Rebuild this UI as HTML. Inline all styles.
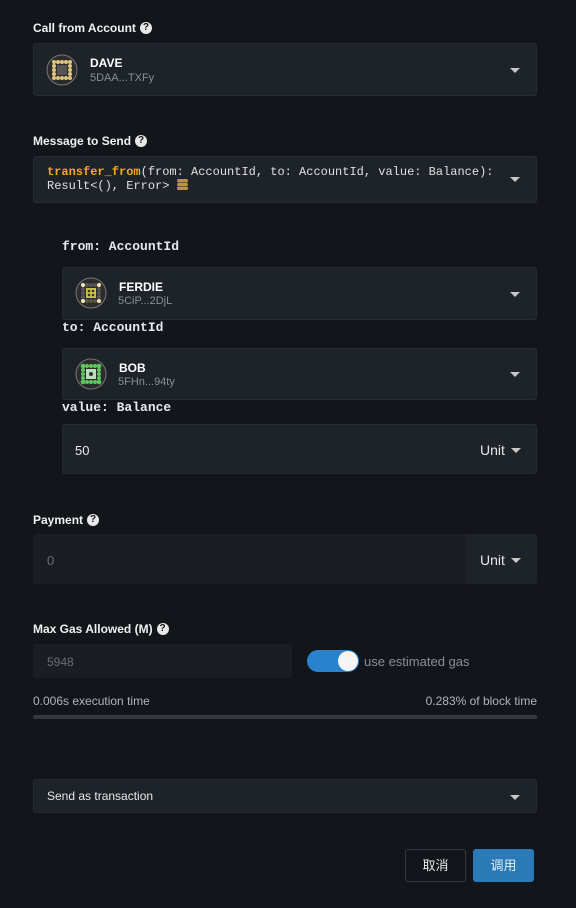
<!DOCTYPE html>
<html><head><meta charset="utf-8"><style>
*{margin:0;padding:0;box-sizing:border-box}
body{width:576px;height:908px;background:#12161a;font-family:"Liberation Sans","Noto Sans CJK SC",sans-serif;color:#e8e8e8;position:relative;overflow:hidden}
.a{position:absolute}
.lbl{position:absolute;font-size:12px;font-weight:bold;color:#f0f0f0;left:33px;line-height:14px}
.q{display:inline-block;width:12px;height:12px;border-radius:50%;background:#e8e8e8;color:#12161a;font-size:10px;text-align:center;line-height:12px;font-weight:bold;vertical-align:top;margin-left:4px;margin-top:1px}
.box{position:absolute;background:#1e2229;border:1px solid #272c33;border-radius:3px}
.caret{position:absolute;width:0;height:0;border-left:5px solid transparent;border-right:5px solid transparent;border-top:5px solid #c8c8c8}
.mono{position:absolute;font-family:"Liberation Mono",monospace;font-size:13px;font-weight:bold;color:#e8e8f0;left:62px}
.name{position:absolute;font-size:12px;font-weight:bold;color:#fff}
.addr{position:absolute;font-size:11px;color:#8a8f96}
</style></head><body>

<div class="lbl" style="top:21px">Call from Account<span class="q">?</span></div>
<div class="box" style="left:33px;top:43px;width:504px;height:53px"></div>
<svg class="a" style="left:46px;top:54px" width="32" height="32" viewBox="0 0 32 32"><circle cx="16" cy="16" r="15" fill="#2c2c2c" stroke="#777" stroke-width="1"/><g fill="#dcc67c"><circle cx="8" cy="8" r="2"/><circle cx="12" cy="8" r="2"/><circle cx="16" cy="8" r="2"/><circle cx="20" cy="8" r="2"/><circle cx="24" cy="8" r="2"/><circle cx="8" cy="24" r="2"/><circle cx="12" cy="24" r="2"/><circle cx="16" cy="24" r="2"/><circle cx="20" cy="24" r="2"/><circle cx="24" cy="24" r="2"/><circle cx="8" cy="12" r="2"/><circle cx="8" cy="16" r="2"/><circle cx="8" cy="20" r="2"/><circle cx="24" cy="12" r="2"/><circle cx="24" cy="16" r="2"/><circle cx="24" cy="20" r="2"/></g><rect x="11" y="11" width="10" height="10" fill="#555"/></svg>
<div class="name" style="left:90px;top:56px">DAVE</div>
<div class="addr" style="left:90px;top:72px">5DAA...TXFy</div>
<div class="caret" style="left:510px;top:68px"></div>

<div class="lbl" style="top:134px">Message to Send<span class="q">?</span></div>
<div class="box" style="left:33px;top:156px;width:504px;height:47px"></div>
<div class="a" style="left:47px;top:166px;font-family:'Liberation Mono',monospace;font-size:12px;line-height:13px;color:#e0e0e0;white-space:pre"><span style="color:#f5a623;font-weight:bold">transfer_from</span>(from: AccountId, to: AccountId, value: Balance):
Result&lt;(), Error&gt; <svg width="11" height="11" viewBox="0 0 11 11" style="vertical-align:-1px"><rect x="0" y="0" width="11" height="3.5" rx="1.5" fill="#b8953f"/><rect x="0" y="4" width="11" height="3" rx="1.5" fill="#b8953f"/><rect x="0" y="7.5" width="11" height="3.5" rx="1.5" fill="#b8953f"/></svg></div>
<div class="caret" style="left:510px;top:177px"></div>

<div class="mono" style="top:239px">from: AccountId</div>
<div class="box" style="left:62px;top:267px;width:475px;height:53px"></div>
<svg class="a" style="left:75px;top:277px" width="32" height="32" viewBox="0 0 32 32"><circle cx="16" cy="16" r="15" fill="#2c2c2c" stroke="#777"/><g fill="#555"><circle cx="12" cy="8" r="2"/><circle cx="16" cy="8" r="2"/><circle cx="20" cy="8" r="2"/><circle cx="12" cy="24" r="2"/><circle cx="16" cy="24" r="2"/><circle cx="20" cy="24" r="2"/><circle cx="8" cy="12" r="2"/><circle cx="8" cy="16" r="2"/><circle cx="8" cy="20" r="2"/><circle cx="24" cy="12" r="2"/><circle cx="24" cy="16" r="2"/><circle cx="24" cy="20" r="2"/></g><g fill="#f0e6b0"><circle cx="8" cy="8" r="2"/><circle cx="24" cy="8" r="2"/><circle cx="8" cy="24" r="2"/><circle cx="24" cy="24" r="2"/></g><rect x="11" y="11" width="10" height="10" fill="#c9c24a"/><g fill="#333"><circle cx="14" cy="14" r="1.3"/><circle cx="18" cy="14" r="1.3"/><circle cx="14" cy="18" r="1.3"/><circle cx="18" cy="18" r="1.3"/></g></svg>
<div class="name" style="left:119px;top:280px">FERDIE</div>
<div class="addr" style="left:118px;top:295px">5CiP...2DjL</div>
<div class="caret" style="left:510px;top:292px"></div>

<div class="mono" style="top:320px">to: AccountId</div>
<div class="box" style="left:62px;top:348px;width:475px;height:52px"></div>
<svg class="a" style="left:75px;top:358px" width="32" height="32" viewBox="0 0 32 32"><circle cx="16" cy="16" r="15" fill="#2c2c2c" stroke="#777"/><g fill="#5cc85c"><circle cx="8" cy="8" r="2.3"/><circle cx="12" cy="8" r="2"/><circle cx="16" cy="8" r="2"/><circle cx="20" cy="8" r="2"/><circle cx="24" cy="8" r="2.3"/><circle cx="8" cy="24" r="2.3"/><circle cx="12" cy="24" r="2"/><circle cx="16" cy="24" r="2"/><circle cx="20" cy="24" r="2"/><circle cx="24" cy="24" r="2.3"/><circle cx="8" cy="12" r="2"/><circle cx="8" cy="16" r="2"/><circle cx="8" cy="20" r="2"/><circle cx="24" cy="12" r="2"/><circle cx="24" cy="16" r="2"/><circle cx="24" cy="20" r="2"/></g><rect x="11" y="11" width="10" height="10" fill="#b8e0b8"/><circle cx="16" cy="16" r="2" fill="#333"/></svg>
<div class="name" style="left:119px;top:361px">BOB</div>
<div class="addr" style="left:118px;top:376px">5FHn...94ty</div>
<div class="caret" style="left:510px;top:372px"></div>

<div class="mono" style="top:400px">value: Balance</div>
<div class="box" style="left:62px;top:424px;width:475px;height:50px"></div>
<div class="a" style="left:75px;top:443px;font-size:13px;color:#e8e8e8">50</div>
<div class="a" style="left:480px;top:442px;font-size:14px;color:#e8e8e8">Unit</div>
<div class="caret" style="left:511px;top:448px"></div>

<div class="lbl" style="top:513px">Payment<span class="q">?</span></div>
<div class="a" style="left:33px;top:534px;width:504px;height:50px;background:#1a1d23;border-radius:3px"></div>
<div class="a" style="left:466px;top:534px;width:71px;height:50px;background:#1e2229;border-radius:0 3px 3px 0"></div>
<div class="a" style="left:47px;top:553px;font-size:13px;color:#6a6e74">0</div>
<div class="a" style="left:480px;top:552px;font-size:14px;color:#e8e8e8">Unit</div>
<div class="caret" style="left:511px;top:558px"></div>

<div class="lbl" style="top:622px">Max Gas Allowed (M)<span class="q">?</span></div>
<div class="a" style="left:33px;top:644px;width:259px;height:34px;background:#1a1d23;border-radius:3px"></div>
<div class="a" style="left:47px;top:655px;font-size:12px;color:#6a6e74">5948</div>
<div class="a" style="left:307px;top:650px;width:52px;height:22px;background:#2a82cc;border-radius:11px"></div>
<div class="a" style="left:338px;top:651px;width:20px;height:20px;background:#f5f5f5;border-radius:50%"></div>
<div class="a" style="left:364px;top:654px;font-size:13px;color:#8a8f96">use estimated gas</div>

<div class="a" style="left:33px;top:694px;font-size:12px;color:#b0b4b8">0.006s execution time</div>
<div class="a" style="right:39px;top:694px;font-size:12px;color:#b0b4b8">0.283% of block time</div>
<div class="a" style="left:33px;top:715px;width:504px;height:4px;background:#33393f;border-radius:2px"></div>

<div class="box" style="left:33px;top:779px;width:504px;height:34px"></div>
<div class="a" style="left:47px;top:789px;font-size:12px;color:#e8e8e8">Send as transaction</div>
<div class="caret" style="left:510px;top:795px"></div>

<div class="a" style="left:405px;top:849px;width:61px;height:33px;border:1px solid #33393f;border-radius:3px;font-size:13px;color:#e8e8e8;text-align:center;line-height:31px">取消</div>
<div class="a" style="left:473px;top:849px;width:61px;height:33px;background:#2a7ab8;border-radius:3px;font-size:13px;color:#e8eef4;text-align:center;line-height:33px">调用</div>
</body></html>
